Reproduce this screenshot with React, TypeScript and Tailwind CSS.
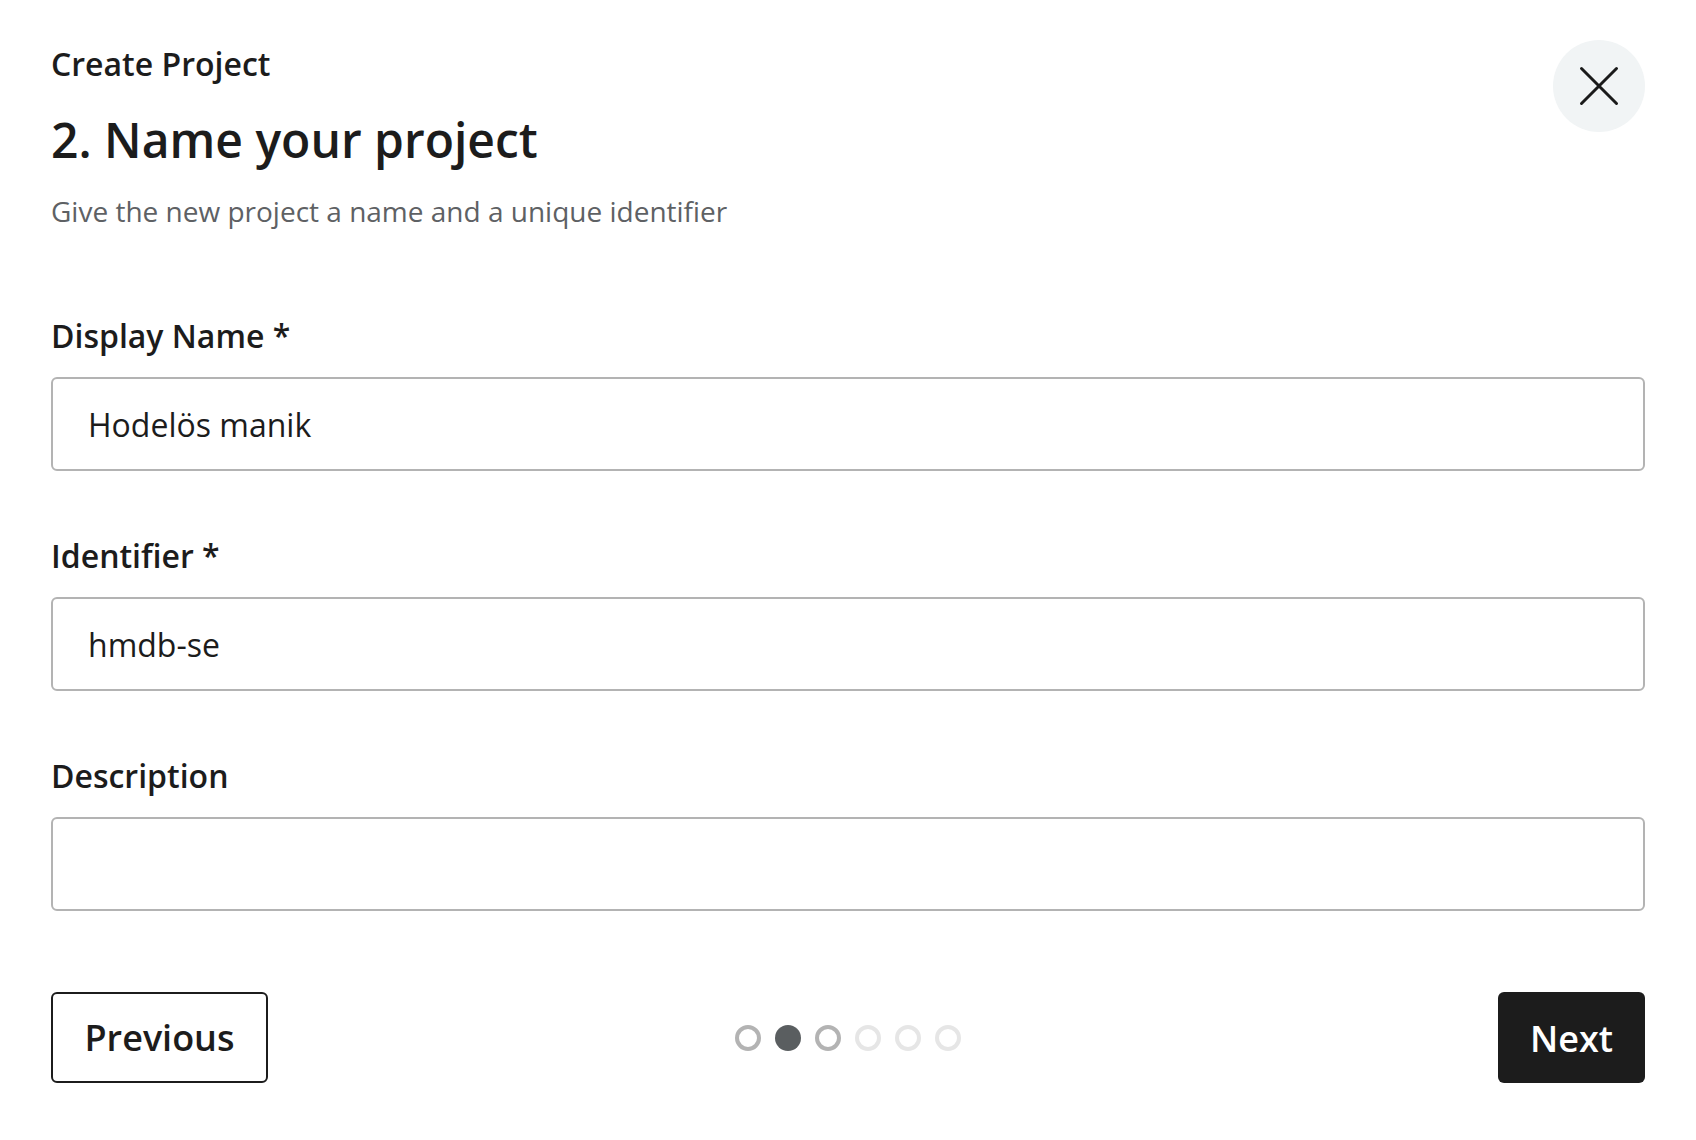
import { useState } from 'react';

const fields = [
  { id: 'displayName', label: 'Display Name *', value: 'Hodelös manik' },
  { id: 'identifier', label: 'Identifier *', value: 'hmdb-se' },
  { id: 'description', label: 'Description', value: '' },
];

const steps = 6;
const current = 1;

function CloseIcon() {
  return (
    <svg width="40" height="40" viewBox="0 0 40 40" fill="none" aria-hidden="true">
      <path d="M2.5 2.5L37.5 37.5M37.5 2.5L2.5 37.5" stroke="#1a1a1a" strokeWidth="3" strokeLinecap="round" />
    </svg>
  );
}

export default function App() {
  const [values, setValues] = useState<Record<string, string>>(
    Object.fromEntries(fields.map((f) => [f.id, f.value])),
  );

  return (
    <div className="min-h-screen bg-white px-[51px] pt-[40px] text-[#1c1c1c] font-['Open_Sans',sans-serif]">
      <div className="flex items-start justify-between">
        <div>
          <p className="text-[32px] font-semibold leading-[48px]">Create Project</p>
          <h1 className="mt-[20px] text-[48px] font-semibold leading-[64px]">2. Name your project</h1>
          <p className="mt-[19px] text-[28px] leading-[40px] text-[#5e6164]">
            Give the new project a name and a unique identifier
          </p>
        </div>
        <button
          type="button"
          aria-label="Close"
          className="flex h-[92px] w-[92px] items-center justify-center rounded-full bg-[#f1f4f5]"
        >
          <CloseIcon />
        </button>
      </div>

      <div className="mt-[83px] flex flex-col gap-[63px]">
        {fields.map((field) => (
          <div key={field.id}>
            <label htmlFor={field.id} className="block text-[32px] font-semibold leading-[44px]">
              {field.label}
            </label>
            <input
              id={field.id}
              value={values[field.id]}
              onChange={(e) => setValues({ ...values, [field.id]: e.target.value })}
              className="mt-[19px] block h-[94px] w-full rounded-[6px] border-2 border-[#b3b3b3] bg-white px-[35px] text-[32px] text-[#1c1c1c] outline-none"
            />
          </div>
        ))}
      </div>

      <div className="mt-[81px] grid grid-cols-3 items-center">
        <div>
          <button
            type="button"
            className="h-[91px] w-[217px] rounded-[6px] border-2 border-[#1c1c1c] bg-white text-[36px] font-semibold text-[#1c1c1c]"
          >
            Previous
          </button>
        </div>
        <div className="flex justify-center gap-[14px]">
          {Array.from({ length: steps }).map((_, i) => (
            <span
              key={i}
              className={
                i === current
                  ? 'h-[26px] w-[26px] rounded-full bg-[#5a5e60]'
                  : i < current + 2
                    ? 'h-[26px] w-[26px] rounded-full border-4 border-[#b3b3b3]'
                    : 'h-[26px] w-[26px] rounded-full border-4 border-[#e6e6e6]'
              }
            />
          ))}
        </div>
        <div className="flex justify-end">
          <button
            type="button"
            className="h-[91px] w-[147px] rounded-[6px] bg-[#1c1c1c] pt-[3px] text-[36px] font-semibold text-white"
          >
            Next
          </button>
        </div>
      </div>
    </div>
  );
}
